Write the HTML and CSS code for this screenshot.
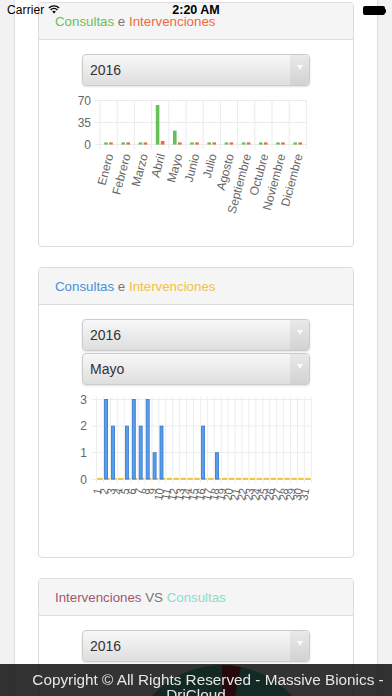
FILE: index.html
```html
<!DOCTYPE html>
<html lang="es">
<head>
<meta charset="utf-8">
<title>DriCloud</title>
<link rel="stylesheet" href="styles.css">
</head>
<body>
<div class="statusbar">
  <div class="sb-left">Carrier
    <svg class="wifi" width="12" height="10" viewBox="0 0 12 10"><path d="M6 9.6 L4.2 7.6 A2.6 2.6 0 0 1 7.8 7.6 Z" fill="#000"/><path d="M2.6 5.9 A4.9 4.9 0 0 1 9.4 5.9" fill="none" stroke="#000" stroke-width="1.4"/><path d="M0.9 4 A7.3 7.3 0 0 1 11.1 4" fill="none" stroke="#000" stroke-width="1.4"/></svg>
  </div>
  <div class="sb-time">2:20 AM</div>
  <div class="sb-right"><span class="battery"></span><span class="nub"></span></div>
</div>

<div class="page">
  <section class="card">
    <header class="card-head"><span class="c-green">Consultas</span>&nbsp;<span class="c-gray">e</span>&nbsp;<span class="c-orange">Intervenciones</span></header>
    <div class="card-body">
      <div class="select"><span class="select-text">2016</span><span class="select-arrow"><i class="tri"></i></span></div>
      <svg class="chart1" width="314" height="160" viewBox="39 86 314 160">
        <g stroke="#ebebeb" stroke-width="1">
          <line x1="95" y1="100.5" x2="306.4" y2="100.5"/>
          <line x1="95" y1="122.5" x2="306.4" y2="122.5"/>
          <line x1="95" y1="144.5" x2="306.4" y2="144.5"/>
          <line x1="100" y1="100" x2="100" y2="149"/>
          <line x1="117.2" y1="100" x2="117.2" y2="149"/>
          <line x1="134.4" y1="100" x2="134.4" y2="149"/>
          <line x1="151.6" y1="100" x2="151.6" y2="149"/>
          <line x1="168.8" y1="100" x2="168.8" y2="149"/>
          <line x1="186" y1="100" x2="186" y2="149"/>
          <line x1="203.2" y1="100" x2="203.2" y2="149"/>
          <line x1="220.4" y1="100" x2="220.4" y2="149"/>
          <line x1="237.6" y1="100" x2="237.6" y2="149"/>
          <line x1="254.8" y1="100" x2="254.8" y2="149"/>
          <line x1="272" y1="100" x2="272" y2="149"/>
          <line x1="289.2" y1="100" x2="289.2" y2="149"/>
          <line x1="306.4" y1="100" x2="306.4" y2="149"/>
        </g>
        <g class="ylab" text-anchor="end">
          <text x="91" y="104.5">70</text>
          <text x="91" y="126.5">35</text>
          <text x="91" y="148.5">0</text>
        </g>
        <g fill="#66c05a">
          <rect x="104.2" y="142.4" width="3.6" height="2.2"/>
          <rect x="121.4" y="142.4" width="3.6" height="2.2"/>
          <rect x="138.6" y="142.4" width="3.6" height="2.2"/>
          <rect x="155.8" y="105" width="3.6" height="39.6"/>
          <rect x="173" y="130.7" width="3.6" height="13.9"/>
          <rect x="190.2" y="142.4" width="3.6" height="2.2"/>
          <rect x="207.4" y="142.4" width="3.6" height="2.2"/>
          <rect x="224.6" y="142.4" width="3.6" height="2.2"/>
          <rect x="241.8" y="142.4" width="3.6" height="2.2"/>
          <rect x="259" y="142.4" width="3.6" height="2.2"/>
          <rect x="276.2" y="142.4" width="3.6" height="2.2"/>
          <rect x="293.4" y="142.4" width="3.6" height="2.2"/>
        </g>
        <g fill="#ec6a3c">
          <rect x="109.2" y="142.4" width="3.6" height="2.2"/>
          <rect x="126.4" y="142.4" width="3.6" height="2.2"/>
          <rect x="143.6" y="142.4" width="3.6" height="2.2"/>
          <rect x="160.8" y="141" width="3.6" height="3.6"/>
          <rect x="178" y="142.4" width="3.6" height="2.2"/>
          <rect x="195.2" y="142.4" width="3.6" height="2.2"/>
          <rect x="212.4" y="142.4" width="3.6" height="2.2"/>
          <rect x="229.6" y="142.4" width="3.6" height="2.2"/>
          <rect x="246.8" y="142.4" width="3.6" height="2.2"/>
          <rect x="264" y="142.4" width="3.6" height="2.2"/>
          <rect x="281.2" y="142.4" width="3.6" height="2.2"/>
          <rect x="298.4" y="142.4" width="3.6" height="2.2"/>
        </g>
        <g class="xlab" text-anchor="end">
          <text transform="translate(113.6 155) rotate(-75)">Enero</text>
          <text transform="translate(130.8 155) rotate(-75)">Febrero</text>
          <text transform="translate(148 155) rotate(-75)">Marzo</text>
          <text transform="translate(165.2 155) rotate(-75)">Abril</text>
          <text transform="translate(182.4 155) rotate(-75)">Mayo</text>
          <text transform="translate(199.6 155) rotate(-75)">Junio</text>
          <text transform="translate(216.8 155) rotate(-75)">Julio</text>
          <text transform="translate(234 155) rotate(-75)">Agosto</text>
          <text transform="translate(251.2 155) rotate(-75)">Septiembre</text>
          <text transform="translate(268.4 155) rotate(-75)">Octubre</text>
          <text transform="translate(285.6 155) rotate(-75)">Noviembre</text>
          <text transform="translate(302.8 155) rotate(-75)">Diciembre</text>
        </g>
      </svg>
    </div>
  </section>

  <section class="card">
    <header class="card-head"><span class="c-blue">Consultas</span>&nbsp;<span class="c-gray">e</span>&nbsp;<span class="c-yellow">Intervenciones</span></header>
    <div class="card-body">
      <div class="select"><span class="select-text">2016</span><span class="select-arrow"><i class="tri"></i></span></div>
      <div class="select select-2"><span class="select-text">Mayo</span><span class="select-arrow"><i class="tri"></i></span></div>
      <svg class="chart2" width="314" height="172" viewBox="39 385 314 172">
        <g stroke="#ededed" stroke-width="1">
          <line x1="92" y1="399.5" x2="311.3" y2="399.5"/>
          <line x1="92" y1="426" x2="311.3" y2="426"/>
          <line x1="92" y1="452.5" x2="311.3" y2="452.5"/>
          <line x1="92" y1="479.5" x2="311.3" y2="479.5"/>
          <line x1="96.5" y1="397" x2="96.5" y2="483"/>
          <line x1="103.43" y1="397" x2="103.43" y2="483"/>
          <line x1="110.36" y1="397" x2="110.36" y2="483"/>
          <line x1="117.29" y1="397" x2="117.29" y2="483"/>
          <line x1="124.22" y1="397" x2="124.22" y2="483"/>
          <line x1="131.15" y1="397" x2="131.15" y2="483"/>
          <line x1="138.08" y1="397" x2="138.08" y2="483"/>
          <line x1="145.01" y1="397" x2="145.01" y2="483"/>
          <line x1="151.94" y1="397" x2="151.94" y2="483"/>
          <line x1="158.87" y1="397" x2="158.87" y2="483"/>
          <line x1="165.8" y1="397" x2="165.8" y2="483"/>
          <line x1="172.73" y1="397" x2="172.73" y2="483"/>
          <line x1="179.66" y1="397" x2="179.66" y2="483"/>
          <line x1="186.59" y1="397" x2="186.59" y2="483"/>
          <line x1="193.52" y1="397" x2="193.52" y2="483"/>
          <line x1="200.45" y1="397" x2="200.45" y2="483"/>
          <line x1="207.38" y1="397" x2="207.38" y2="483"/>
          <line x1="214.31" y1="397" x2="214.31" y2="483"/>
          <line x1="221.24" y1="397" x2="221.24" y2="483"/>
          <line x1="228.17" y1="397" x2="228.17" y2="483"/>
          <line x1="235.1" y1="397" x2="235.1" y2="483"/>
          <line x1="242.03" y1="397" x2="242.03" y2="483"/>
          <line x1="248.96" y1="397" x2="248.96" y2="483"/>
          <line x1="255.89" y1="397" x2="255.89" y2="483"/>
          <line x1="262.82" y1="397" x2="262.82" y2="483"/>
          <line x1="269.75" y1="397" x2="269.75" y2="483"/>
          <line x1="276.68" y1="397" x2="276.68" y2="483"/>
          <line x1="283.61" y1="397" x2="283.61" y2="483"/>
          <line x1="290.54" y1="397" x2="290.54" y2="483"/>
          <line x1="297.47" y1="397" x2="297.47" y2="483"/>
          <line x1="304.4" y1="397" x2="304.4" y2="483"/>
          <line x1="311.33" y1="397" x2="311.33" y2="483"/>
        </g>
        <g class="ylab" text-anchor="end">
          <text x="87" y="403.5">3</text>
          <text x="87" y="430">2</text>
          <text x="87" y="457">1</text>
          <text x="87" y="483.5">0</text>
        </g>
        <g fill="#f2c744">
          <rect x="97.3" y="477.8" width="5.4" height="2.2"/>
          <rect x="104.23" y="477.8" width="5.4" height="2.2"/>
          <rect x="111.16" y="477.8" width="5.4" height="2.2"/>
          <rect x="118.09" y="477.8" width="5.4" height="2.2"/>
          <rect x="125.02" y="477.8" width="5.4" height="2.2"/>
          <rect x="131.95" y="477.8" width="5.4" height="2.2"/>
          <rect x="138.88" y="477.8" width="5.4" height="2.2"/>
          <rect x="145.81" y="477.8" width="5.4" height="2.2"/>
          <rect x="152.74" y="477.8" width="5.4" height="2.2"/>
          <rect x="159.67" y="477.8" width="5.4" height="2.2"/>
          <rect x="166.6" y="477.8" width="5.4" height="2.2"/>
          <rect x="173.53" y="477.8" width="5.4" height="2.2"/>
          <rect x="180.46" y="477.8" width="5.4" height="2.2"/>
          <rect x="187.39" y="477.8" width="5.4" height="2.2"/>
          <rect x="194.32" y="477.8" width="5.4" height="2.2"/>
          <rect x="201.25" y="477.8" width="5.4" height="2.2"/>
          <rect x="208.18" y="477.8" width="5.4" height="2.2"/>
          <rect x="215.11" y="477.8" width="5.4" height="2.2"/>
          <rect x="222.04" y="477.8" width="5.4" height="2.2"/>
          <rect x="228.97" y="477.8" width="5.4" height="2.2"/>
          <rect x="235.9" y="477.8" width="5.4" height="2.2"/>
          <rect x="242.83" y="477.8" width="5.4" height="2.2"/>
          <rect x="249.76" y="477.8" width="5.4" height="2.2"/>
          <rect x="256.69" y="477.8" width="5.4" height="2.2"/>
          <rect x="263.62" y="477.8" width="5.4" height="2.2"/>
          <rect x="270.55" y="477.8" width="5.4" height="2.2"/>
          <rect x="277.48" y="477.8" width="5.4" height="2.2"/>
          <rect x="284.41" y="477.8" width="5.4" height="2.2"/>
          <rect x="291.34" y="477.8" width="5.4" height="2.2"/>
          <rect x="298.27" y="477.8" width="5.4" height="2.2"/>
          <rect x="305.2" y="477.8" width="5.4" height="2.2"/>
        </g>
        <g fill="#5b9ee8" stroke="#2f76d2" stroke-width="0.8">
          <rect x="104.6" y="399.4" width="3" height="79.6"/>
          <rect x="111.5" y="426.1" width="3" height="52.9"/>
          <rect x="125.4" y="426.1" width="3" height="52.9"/>
          <rect x="132.3" y="399.4" width="3" height="79.6"/>
          <rect x="139.2" y="426.1" width="3" height="52.9"/>
          <rect x="146.2" y="399.4" width="3" height="79.6"/>
          <rect x="153.1" y="452.7" width="3" height="26.3"/>
          <rect x="160" y="426.1" width="3" height="52.9"/>
          <rect x="201.6" y="426.1" width="3" height="52.9"/>
          <rect x="215.5" y="452.7" width="3" height="26.3"/>
        </g>
        <g class="dlab" text-anchor="end">
          <text transform="translate(101.5 489) rotate(-80)">1</text>
          <text transform="translate(108.4 489) rotate(-80)">2</text>
          <text transform="translate(115.3 489) rotate(-80)">3</text>
          <text transform="translate(122.3 489) rotate(-80)">4</text>
          <text transform="translate(129.2 489) rotate(-80)">5</text>
          <text transform="translate(136.1 489) rotate(-80)">6</text>
          <text transform="translate(143 489) rotate(-80)">7</text>
          <text transform="translate(150 489) rotate(-80)">8</text>
          <text transform="translate(156.9 489) rotate(-80)">9</text>
          <text transform="translate(163.8 489) rotate(-80)">10</text>
          <text transform="translate(170.8 489) rotate(-80)">11</text>
          <text transform="translate(177.7 489) rotate(-80)">12</text>
          <text transform="translate(184.6 489) rotate(-80)">13</text>
          <text transform="translate(191.5 489) rotate(-80)">14</text>
          <text transform="translate(198.5 489) rotate(-80)">15</text>
          <text transform="translate(205.4 489) rotate(-80)">16</text>
          <text transform="translate(212.3 489) rotate(-80)">17</text>
          <text transform="translate(219.3 489) rotate(-80)">18</text>
          <text transform="translate(226.2 489) rotate(-80)">19</text>
          <text transform="translate(233.1 489) rotate(-80)">20</text>
          <text transform="translate(240 489) rotate(-80)">21</text>
          <text transform="translate(247 489) rotate(-80)">22</text>
          <text transform="translate(253.9 489) rotate(-80)">23</text>
          <text transform="translate(260.8 489) rotate(-80)">24</text>
          <text transform="translate(267.8 489) rotate(-80)">25</text>
          <text transform="translate(274.7 489) rotate(-80)">26</text>
          <text transform="translate(281.6 489) rotate(-80)">27</text>
          <text transform="translate(288.6 489) rotate(-80)">28</text>
          <text transform="translate(295.5 489) rotate(-80)">29</text>
          <text transform="translate(302.4 489) rotate(-80)">30</text>
          <text transform="translate(309.3 489) rotate(-80)">31</text>
        </g>
      </svg>
    </div>
  </section>

  <section class="card">
    <header class="card-head"><span class="c-rose">Intervenciones</span>&nbsp;<span class="c-gray">VS</span>&nbsp;<span class="c-teal">Consultas</span></header>
    <div class="card-body">
      <div class="select"><span class="select-text">2016</span><span class="select-arrow"><i class="tri"></i></span></div>
      <svg class="pie" width="314" height="200" viewBox="39 662 314 200">
        <circle cx="222" cy="760" r="95" fill="#5fd0b2"/>
        <path d="M222 760 L222 665 A95 95 0 0 1 241 666.9 Z" fill="#b7303f"/>
      </svg>
    </div>
  </section>
</div>

<footer class="footer">
  <span class="foot-line1">Copyright © All Rights Reserved - Massive Bionics -</span>
  <span class="foot-line2">DriCloud</span>
</footer>
</body>
</html>
```

FILE: styles.css
```css
html, body {
  margin: 0;
  padding: 0;
}
body {
  background: #f2f2f2;
  font-family: "Liberation Sans", Arial, Helvetica, sans-serif;
  height: 696px;
  overflow: hidden;
}

.statusbar {
  position: absolute;
  top: 0;
  left: 0;
  right: 0;
  height: 20px;
  z-index: 5;
  font-size: 12px;
  color: #000;
}
.sb-left {
  position: absolute;
  left: 7px;
  top: 3px;
  display: flex;
  align-items: center;
  gap: 4px;
  letter-spacing: 0.1px;
}
.wifi { margin-top: -2px; }
.sb-time {
  text-align: center;
  font-weight: bold;
  padding-top: 3px;
  font-size: 12.5px;
}
.sb-right {
  position: absolute;
  right: 6px;
  top: 6px;
  display: flex;
  align-items: center;
}
.battery {
  width: 22px;
  height: 9px;
  background: #000;
  border-radius: 2px;
}
.nub {
  width: 1.5px;
  height: 4px;
  background: #000;
  border-radius: 0 1px 1px 0;
}

.page {
  margin-left: 14px;
  width: 316px;
  min-height: 700px;
  background: #fff;
  border-left: 1px solid #dedede;
  border-right: 1px solid #dedede;
  padding: 2px 23px 0;
}

.card {
  border: 1px solid #dcdcdc;
  border-radius: 4px;
  background: #fff;
  margin-bottom: 20px;
  overflow: hidden;
}
.card-head {
  height: 36px;
  background: #f5f5f5;
  border-bottom: 1px solid #dcdcdc;
  display: flex;
  align-items: center;
  padding-left: 16px;
  font-size: 13.3px;
}
.c-green { color: #6cbf57; }
.c-orange { color: #ee6b3e; }
.c-gray { color: #777; }
.c-blue { color: #4a8fd8; }
.c-yellow { color: #f2c242; }
.c-rose { color: #a2576c; }
.c-teal { color: #8edbc9; }

.card-body {
  padding-top: 14px;
  display: flex;
  flex-direction: column;
  align-items: center;
}

.select {
  width: 228px;
  height: 32px;
  box-sizing: border-box;
  border: 1px solid #cbcbcb;
  border-radius: 4px;
  background: linear-gradient(#f8f8f8, #dedede);
  box-shadow: 0 1px 2px rgba(0, 0, 0, 0.12);
  display: flex;
  overflow: hidden;
}
.select-2 { margin-top: 2px; }
.select-text {
  flex: 1;
  padding-left: 7px;
  line-height: 30px;
  font-size: 14px;
  color: #333;
}
.select-arrow {
  width: 19px;
  background: linear-gradient(#e9e9e9, #d2d2d2);
  display: flex;
  align-items: center;
  justify-content: center;
}
.tri {
  width: 0;
  height: 0;
  border-left: 3px solid transparent;
  border-right: 3px solid transparent;
  border-top: 5px solid #fbfbfb;
  margin-top: -6px;
}

.chart1, .chart2, .pie {
  display: block;
}
.ylab text {
  font-size: 12px;
  fill: #666;
  font-family: "Liberation Sans", Arial, sans-serif;
}
.xlab text {
  font-size: 12px;
  fill: #666;
  font-family: "Liberation Sans", Arial, sans-serif;
}
.dlab text {
  font-size: 11px;
  fill: #666;
  font-family: "Liberation Sans", Arial, sans-serif;
}

.footer {
  position: fixed;
  left: 0;
  right: 0;
  bottom: 0;
  height: 32px;
  background: rgba(0, 0, 0, 0.8);
  color: #e6e6e6;
  font-size: 15.3px;
  line-height: 15px;
  padding-top: 8px;
  box-sizing: border-box;
  display: flex;
  flex-direction: column;
  align-items: center;
  overflow: hidden;
  z-index: 6;
}
.foot-line1 {
  white-space: nowrap;
  padding-left: 24px;
}
.foot-line2 {
  display: block;
}
```
